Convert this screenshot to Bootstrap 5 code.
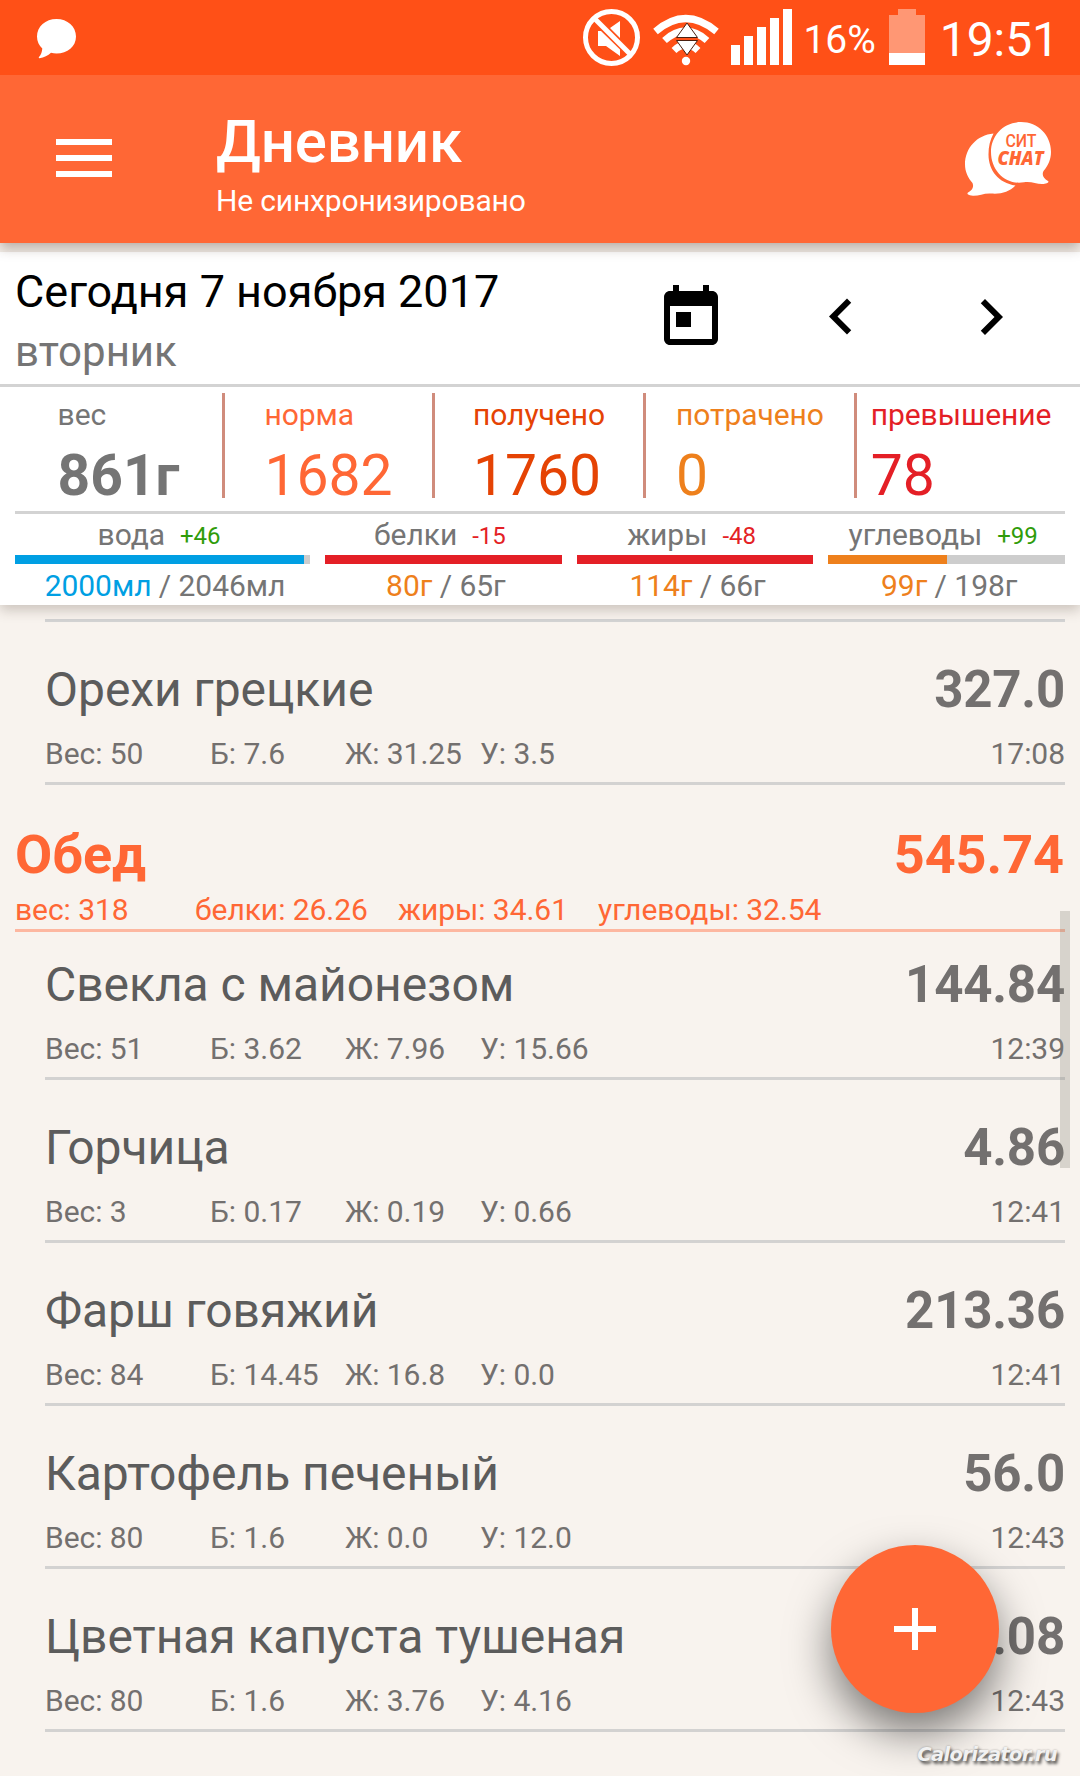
<!DOCTYPE html>
<html lang="ru">
<head>
<meta charset="utf-8">
<meta name="viewport" content="width=device-width, initial-scale=1">
<title>Дневник</title>
<link href="https://cdn.jsdelivr.net/npm/bootstrap@5.3.0/dist/css/bootstrap.min.css" rel="stylesheet">
<style>
  body { font-family: Roboto, "Noto Sans", sans-serif; background: #f8f3ee; color: #757575; font-size: 30px; line-height: 36px; letter-spacing: -.05px; }
  .screen { width: 1080px; height: 1776px; }
  svg { display: block; flex: none; }
  .status { height: 75px; background: #ff5017; padding: 0 21px 0 37px; z-index: 4; }
  .status .pct { font-size: 39px; line-height: 48px; margin-left: 8px; padding-top: 4px; }
  .status .battery { margin-left: 13px; }
  .status .clock { font-size: 48px; line-height: 58px; margin-left: 15px; padding-top: 4px; }
  .appbar { height: 168px; background: #ff6735; padding: 0 29px 0 56px; box-shadow: 0 4px 12px rgba(60,40,30,.38); z-index: 3; }
  .appbar h1 { font-size: 60px; line-height: 66px; font-weight: 500; margin: 0; letter-spacing: -.15px; }
  .appbar .sub { margin-top: 8px; letter-spacing: -.17px; }
  .titles { margin-left: 103px; padding-top: 34px; }
  .panel { margin-top: 9px; background: #fff; box-shadow: 0 5px 12px rgba(60,40,30,.24); z-index: 2; }
  .datebar { height: 135px; border-bottom: 3px solid #d3d3d3; padding: 13px 53px 0 15px; letter-spacing: 0; }
  .datebar .today { font-size: 45px; line-height: 53px; color: #000; }
  .datebar .weekday { font-size: 42px; line-height: 50px; margin-top: 9px; }
  .datebar .tools { gap: 78px; margin-top: 17px; }
  .totals { margin: 0 15px; padding: 6px 0 13px; border-bottom: 3px solid #d3d3d3; }
  .total { height: 105px; padding-top: 4px; border-right: 3px solid #d08c7c; flex: 0 0 211px; }
  .total:nth-child(-n+2) { flex-basis: 210px; }
  .total:last-child { border-right: 0; flex: 1 1 0; }
  .total .num { font-size: 57px; line-height: 48px; margin-top: 19px; }
  .c-norm { color: #ff6735; } .c-got { color: #e54304; } .c-spent { color: #ee801c; } .c-over { color: #e41f26; }
  .c-plus { color: #2f9c0a; } .c-water { color: #009fe3; }
  .macros { gap: 15px; padding: 3px 15px 1px; }
  .macro { flex: 1 1 0; min-width: 0; }
  .macro.water { flex: 0 0 295px; }
  .macro .title { height: 36px; padding-right: 7px; }
  .macro .amount { padding-left: 5px; }
  .macro .delta { font-size: 24px; line-height: 24px; margin-left: 15px; position: relative; top: -1px; }
  .progress { height: 9px; border-radius: 0; background: #cdcdcd; margin: 2px 0 4px; }
  .bg-water { background: #009fe3; } .bg-over { background: #e41f26; } .bg-part { background: #ee801c; }
  .diary { padding-top: 14px; }
  .rule { height: 3px; margin-left: 45px; margin-right: 15px; background: #d3d3d3; }
  .food { margin: 15px 15px 0 45px; padding: 25px 0 10px; border-bottom: 3px solid #d3d2d1; color: #73706f; }
  .meal + .food { margin-top: 0; }
  .food .name { font-size: 48px; line-height: 56px; color: #5c5c5c; }
  .food .kcal { font-size: 51px; line-height: 56px; font-weight: 700; letter-spacing: -.2px; }
  .food .facts { margin-top: 18px; }
  .w-a { width: 165px; } .w-b { width: 135px; }
  .meal { margin: 0 15px; padding: 38px 0 1px; border-bottom: 3px solid #fdb7a0; color: #ff6735; }
  .meal .head { font-size: 54px; line-height: 63px; font-weight: 700; padding-right: 1px; }
  .meal .facts { margin-top: 6px; }
  .w-m1 { width: 180px; } .w-m2 { width: 203px; } .w-m3 { width: 200px; }
  .thumb { left: 1060px; top: 911px; width: 10px; height: 257px; background: rgba(124,124,116,.27); z-index: 2; }
  .fab { left: 831px; top: 1545px; width: 168px; height: 168px; background: #ff6735; z-index: 3; box-shadow: 0 20px 44px rgba(0,0,0,.5); }
  .sitemark { right: 23px; bottom: 9px; font: italic 700 19.5px/24px "DejaVu Sans", sans-serif; letter-spacing: -.65px; color: #f1f1f1; z-index: 4; text-shadow: 2px 3px 3px rgba(0,0,0,.6), 0 0 2px rgba(0,0,0,.35); }
</style>
<script src="https://cdn.jsdelivr.net/npm/bootstrap@5.3.0/dist/js/bootstrap.bundle.min.js"></script>
</head>
<body>
<div class="screen position-relative overflow-hidden d-flex flex-column">

  <div class="status position-relative d-flex align-items-center text-white flex-shrink-0">
    <svg width="40" height="75" viewBox="0 0 40 75" fill="#fff"><path d="M19.500 19C30.500 19 39 26.500 39 36.500S30.500 53.500 19.500 53.500q-3 0-5.500-.7C11 55.500 7 57.500 2.500 58.300c-.8.100-1-.6-.5-1.200C4 54.500 5 52 5.300 48.500 2 45.500 0 41.500 0 36.500 0 26.500 8.500 19 19.500 19z"/></svg>
    <div class="ms-auto d-flex align-items-center">
      <svg width="213" height="75" viewBox="583 0 213 75" fill="#fff">
        <circle cx="612.500" cy="37.500" r="26" fill="none" stroke="#fff" stroke-width="5"/>
        <path d="M599 31h3l19 18.500V56l-14-10h-8zM611 28l10-7v17z"/>
        <path d="M595 18l37 37" stroke="#fff" stroke-width="5"/>
        <g fill="none" stroke="#fff" stroke-width="7"><path d="M656.500 31.500Q686.500 5.500 717.500 31.500"/><path d="M665.500 40.500Q686.500 21.500 708 40.500"/><path d="M675 50.500q12-11.500 24 0"/></g>
        <circle cx="687" cy="61" r="4.200"/>
        <path d="M677.500 37.500h21L688 23zM677.500 40.500h21L688 55z" stroke="#4a2010" stroke-width="1"/>
        <path d="M677.500 39h21" stroke="#ff5017" stroke-width="2"/>
        <path d="M732 45h9v20h-9zM745 36h9v29h-9zM758 27h9v38h-9zM771 18h9v47h-9zM784 9h9v56h-9z"/>
      </svg>
      <span class="pct">16%</span>
      <svg class="battery" width="36" height="75" viewBox="0 0 36 75"><path d="M9 9h18v6h9v38H0V15h9z" fill="#ff9774"/><path d="M0 53h36v12H0z" fill="#fff"/></svg>
      <span class="clock">19:51</span>
    </div>
  </div>

  <header class="appbar d-flex position-relative text-white flex-shrink-0">
    <svg width="57" height="168" viewBox="0 0 57 168" fill="#fff"><path d="M0 64h56v6H0zM0 80h56v6H0zM0 96h56v6H0z"/></svg>
    <div class="titles">
      <h1>Дневник</h1>
      <div class="sub">Не синхронизировано</div>
    </div>
    <svg class="ms-auto" width="87" height="168" viewBox="964 75 87 168">
      <path fill="#fff" d="M993.500 133.500C977 135 965 148 965 164.500c0 7 3 13.500 7.500 18.500 1.500 4 0 7-4.500 9.500-1.500 1 0 3 5 3.200 6 .2 11-2.700 18-2.200 10 .8 18-1.500 24.500-8-17-2.500-27-15-27-31 0-8 1.500-14.500 5-21z"/>
      <path fill="#fff" d="M1021 122c17 0 30 13 30 30 0 7.500-2.800 13.500-7.500 19-2 4 0 7.500 4.500 10 1.500 1-1 3-6 3-6 0-11-3-18-1.800-18 3.300-33-11.200-33-30.200 0-17 13-30 30-30z"/>
      <text x="1021" y="146.700" text-anchor="middle" font-family="Roboto" font-weight="500" font-size="17.500" textLength="31" lengthAdjust="spacingAndGlyphs" fill="#ff6735">СИТ</text>
      <text x="1020.500" y="164.500" text-anchor="middle" font-family="Open Sans" font-weight="800" font-style="italic" font-size="19.500" textLength="46" lengthAdjust="spacingAndGlyphs" fill="#ff6735">CHAT</text>
    </svg>
  </header>

  <section class="panel position-relative flex-shrink-0">
    <div class="datebar d-flex justify-content-between align-items-start">
      <div>
        <div class="today">Сегодня 7 ноября 2017</div>
        <div class="weekday">вторник</div>
      </div>
      <div class="tools d-flex">
        <svg width="72" height="72" viewBox="0 0 24 24"><path d="M19 3h-1V1h-2v2H8V1H6v2H5c-1.110 0-1.990.9-1.990 2L3 19c0 1.100.89 2 2 2h14c1.100 0 2-.9 2-2V5c0-1.100-.9-2-2-2zm0 16H5V8h14v11zM7 10h5v5H7z"/></svg>
        <svg width="72" height="72" viewBox="0 .5 24 24"><path d="M15.410 7.410L14 6l-6 6 6 6 1.410-1.410L10.830 12z"/></svg>
        <svg width="72" height="72" viewBox="0 .33 24 24"><path d="M10 6L8.590 7.410 13.170 12l-4.580 4.590L10 18l6-6z"/></svg>
      </div>
    </div>

    <div class="totals d-flex">
      <div class="total d-flex justify-content-center"><div><div>вес</div><div class="num fw-bold">861г</div></div></div>
      <div class="total d-flex justify-content-center c-norm"><div><div>норма</div><div class="num">1682</div></div></div>
      <div class="total d-flex justify-content-center c-got"><div><div>получено</div><div class="num">1760</div></div></div>
      <div class="total d-flex justify-content-center c-spent"><div><div>потрачено</div><div class="num">0</div></div></div>
      <div class="total d-flex justify-content-center c-over"><div><div>превышение</div><div class="num">78</div></div></div>
    </div>

    <div class="macros d-flex text-center">
      <div class="macro water">
        <div class="title">вода<span class="delta c-plus">+46</span></div>
        <div class="progress"><div class="progress-bar bg-water" style="width:97.8%"></div></div>
        <div class="amount"><span class="c-water">2000мл</span> / 2046мл</div>
      </div>
      <div class="macro">
        <div class="title">белки<span class="delta c-over">-15</span></div>
        <div class="progress"><div class="progress-bar bg-over" style="width:100%"></div></div>
        <div class="amount"><span class="c-spent">80г</span> / 65г</div>
      </div>
      <div class="macro">
        <div class="title">жиры<span class="delta c-over">-48</span></div>
        <div class="progress"><div class="progress-bar bg-over" style="width:100%"></div></div>
        <div class="amount"><span class="c-spent">114г</span> / 66г</div>
      </div>
      <div class="macro">
        <div class="title">углеводы<span class="delta c-plus">+99</span></div>
        <div class="progress"><div class="progress-bar bg-part" style="width:50.2%"></div></div>
        <div class="amount"><span class="c-spent">99г</span> / 198г</div>
      </div>
    </div>
  </section>

  <main class="diary">
    <div class="rule"></div>
    <div class="food">
      <div class="d-flex justify-content-between"><span class="name">Орехи грецкие</span><span class="kcal">327.0</span></div>
      <div class="facts d-flex"><span class="w-a">Вес: 50</span><span class="w-b">Б: 7.6</span><span class="w-b">Ж: 31.25</span><span>У: 3.5</span><span class="ms-auto">17:08</span></div>
    </div>

    <div class="meal">
      <div class="head d-flex justify-content-between"><span>Обед</span><span>545.74</span></div>
      <div class="facts d-flex"><span class="w-m1">вес: 318</span><span class="w-m2">белки: 26.26</span><span class="w-m3">жиры: 34.61</span><span>углеводы: 32.54</span></div>
    </div>
    <div class="food">
      <div class="d-flex justify-content-between"><span class="name">Свекла с майонезом</span><span class="kcal">144.84</span></div>
      <div class="facts d-flex"><span class="w-a">Вес: 51</span><span class="w-b">Б: 3.62</span><span class="w-b">Ж: 7.96</span><span>У: 15.66</span><span class="ms-auto">12:39</span></div>
    </div>
    <div class="food">
      <div class="d-flex justify-content-between"><span class="name">Горчица</span><span class="kcal">4.86</span></div>
      <div class="facts d-flex"><span class="w-a">Вес: 3</span><span class="w-b">Б: 0.17</span><span class="w-b">Ж: 0.19</span><span>У: 0.66</span><span class="ms-auto">12:41</span></div>
    </div>
    <div class="food">
      <div class="d-flex justify-content-between"><span class="name">Фарш говяжий</span><span class="kcal">213.36</span></div>
      <div class="facts d-flex"><span class="w-a">Вес: 84</span><span class="w-b">Б: 14.45</span><span class="w-b">Ж: 16.8</span><span>У: 0.0</span><span class="ms-auto">12:41</span></div>
    </div>
    <div class="food">
      <div class="d-flex justify-content-between"><span class="name">Картофель печеный</span><span class="kcal">56.0</span></div>
      <div class="facts d-flex"><span class="w-a">Вес: 80</span><span class="w-b">Б: 1.6</span><span class="w-b">Ж: 0.0</span><span>У: 12.0</span><span class="ms-auto">12:43</span></div>
    </div>
    <div class="food">
      <div class="d-flex justify-content-between"><span class="name">Цветная капуста тушеная</span><span class="kcal">.08</span></div>
      <div class="facts d-flex"><span class="w-a">Вес: 80</span><span class="w-b">Б: 1.6</span><span class="w-b">Ж: 3.76</span><span>У: 4.16</span><span class="ms-auto">12:43</span></div>
    </div>
  </main>

  <div class="thumb position-absolute"></div>
  <button class="fab btn border-0 rounded-circle position-absolute p-0 d-flex align-items-center justify-content-center" type="button" aria-label="Добавить">
    <svg width="42" height="42" viewBox="0 0 42 42" fill="#fff"><path d="M18 0h6v18h18v6H24v18h-6V24H0v-6h18z"/></svg>
  </button>
  <div class="sitemark position-absolute">Calorizator.ru</div>
</div>
</body>
</html>
